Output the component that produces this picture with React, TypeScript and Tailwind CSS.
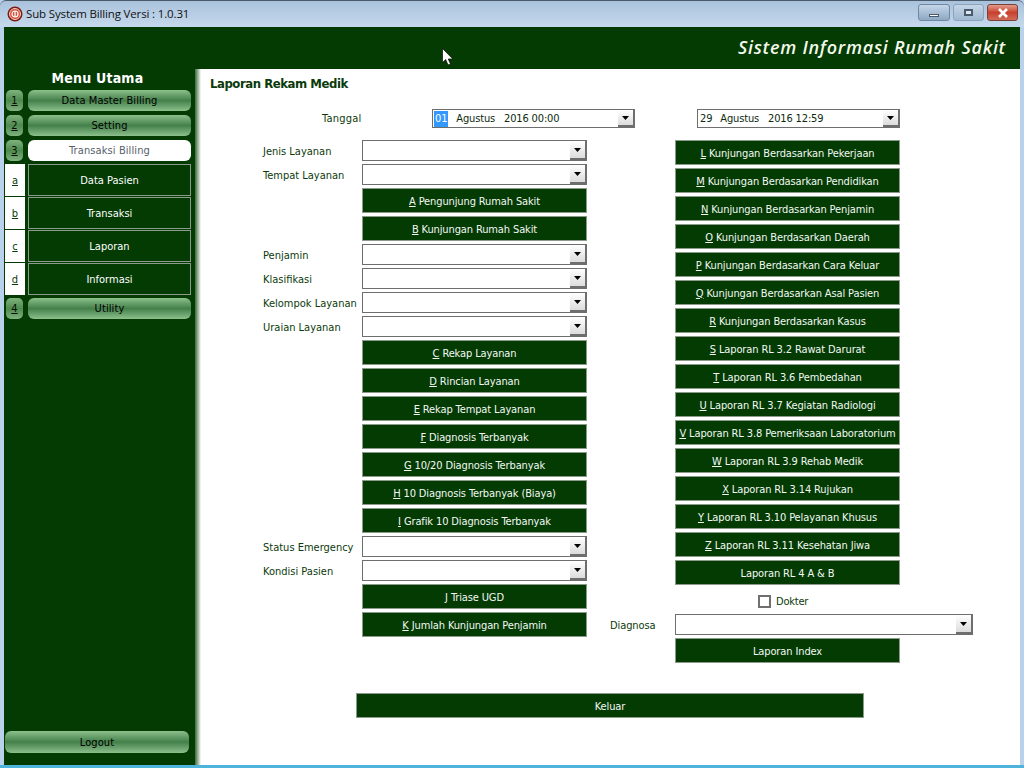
import type { ReactNode } from "react";

const font = { tahoma: "font-['DejaVu_Sans_Condensed','DejaVu_Sans',sans-serif]" };

function Mnemonic({ text }: { text: string }) {
  // first letter is the keyboard shortcut
  return (
    <>
      <span className="underline">{text[0]}</span>
      {text.slice(1)}
    </>
  );
}

function GreenButton({ label, w = "w-[225px]" }: { label: ReactNode; w?: string }) {
  return (
    <button className={`${w} block h-[25px] pt-[1px] shrink-0 bg-[#033b03] border border-[#8b9a8b] text-[#f4f8f4] text-[11px] leading-none tracking-[-0.12px] whitespace-nowrap`}>
      {label}
    </button>
  );
}

function Combo({ w = "w-[225px]", h = "h-[21px]", children }: { w?: string; h?: string; children?: ReactNode }) {
  return (
    <div className={`${w} ${h} shrink-0 bg-white border-l border-t border-b border-[#6e6e6e] flex items-center justify-between text-[11px] text-[#0d2a0d]`}>
      <div className="flex items-center pl-[1px] pt-[1px] whitespace-nowrap tracking-[-0.15px]">{children}</div>
      <div className="w-[17px] h-full bg-gradient-to-b from-[#ffffff] to-[#dcdcdc] border-r-2 border-b-2 border-[#6e6e6e] flex items-center justify-center">
        <svg width="7" height="4" viewBox="0 0 7 4">
          <path d="M0 0h7L3.5 4z" fill="#000" />
        </svg>
      </div>
    </div>
  );
}

function Field({ label }: { label: string }) {
  return (
    <div className="flex items-center h-[21px]">
      <span className="w-[99px] pt-[4px] text-[11px] text-[#0b3a0b] whitespace-nowrap">{label}</span>
      <Combo />
    </div>
  );
}

function LeftBtn({ label }: { label: string }) {
  return (
    <div className="pl-[99px]">
      <GreenButton label={<Mnemonic text={label} />} />
    </div>
  );
}

function MenuPill({ n, label, active }: { n: string; label: string; active?: boolean }) {
  return (
    <div className="flex gap-[5px] h-[21px] pl-[2px]">
      <div className="w-[17px] rounded-[5px] bg-gradient-to-b from-[#7fb27f] via-[#4f8a4f] to-[#7fb27f] text-[11px] pt-[1px] flex items-center justify-center text-[#020f02] underline">
        {n}
      </div>
      <div
        className={
          active
            ? "w-[163px] rounded-[6px] pt-[2px] bg-white text-[#55606a] text-[11px] tracking-[0.1px] flex items-center justify-center"
            : "w-[163px] rounded-[6px] pt-[2px] bg-gradient-to-b from-[#8cc08c] via-[#44804a] to-[#8cc08c] text-[#000] text-[11px] tracking-[0.1px] flex items-center justify-center"
        }
      >
        {label}
      </div>
    </div>
  );
}

function SubItem({ k, label }: { k: string; label: string }) {
  return (
    <div className="flex h-[32px] gap-[3px] mb-[1px] pl-[1px]">
      <div className="w-[20px] bg-white text-[11px] pt-[2px] text-[#0b3a0b] underline flex items-center justify-center">{k}</div>
      <div className="w-[163px] border border-[#8b9a8b] pt-[2px] text-white text-[11px] flex items-center justify-center">{label}</div>
    </div>
  );
}

const rightButtons = [
  "L Kunjungan Berdasarkan Pekerjaan",
  "M Kunjungan Berdasarkan Pendidikan",
  "N Kunjungan Berdasarkan Penjamin",
  "O Kunjungan Berdasarkan Daerah",
  "P Kunjungan Berdasarkan Cara Keluar",
  "Q Kunjungan Berdasarkan Asal Pasien",
  "R Kunjungan Berdasarkan Kasus",
  "S Laporan RL 3.2 Rawat Darurat",
  "T Laporan RL 3.6 Pembedahan",
  "U Laporan RL 3.7 Kegiatan Radiologi",
  "V Laporan RL 3.8 Pemeriksaan Laboratorium",
  "W Laporan RL 3.9 Rehab Medik",
  "X Laporan RL 3.14 Rujukan",
  "Y Laporan RL 3.10 Pelayanan Khusus",
  "Z Laporan RL 3.11 Kesehatan Jiwa",
];

export default function App() {
  return (
    <div className={`w-[1024px] h-[768px] overflow-hidden relative flex flex-col bg-[#b9d1ea] border-b-[3px] border-[#4fb4dc] ${font.tahoma}`}>
      {/* title bar */}
      <div className="h-[27px] shrink-0 rounded-t-[6px] bg-gradient-to-b from-[#a9c2dc] to-[#c6d9ec] border-t border-[#4a5a6a] flex items-center pl-[7px] pr-[6px]">
        <svg width="16" height="16" viewBox="0 0 16 16" className="shrink-0">
          <circle cx="8" cy="8" r="7.5" fill="#7a1a12" />
          <circle cx="8" cy="8" r="5.5" fill="#d9503a" stroke="#f3d0c0" />
          <circle cx="8" cy="8" r="3" fill="none" stroke="#fff" strokeWidth="1.2" />
          <rect x="7.4" y="5" width="1.2" height="6" fill="#fff" />
        </svg>
        <span className="ml-[3px] font-['Open_Sans',sans-serif] text-[11.5px] tracking-[-0.15px] text-[#111]">Sub System Billing Versi : 1.0.31</span>
        <div className="ml-auto flex gap-[3px] -mt-[3px]">
          <div className="w-[32px] h-[17px] rounded-[3px] border border-[#6f88a3] bg-gradient-to-b from-[#c5d6e8] to-[#8ea8c3] flex items-center justify-center">
            <div className="w-[10px] h-[3px] bg-white border border-[#4a5a6a] mt-[5px]" />
          </div>
          <div className="w-[31px] h-[17px] rounded-[3px] border border-[#8ba3bc] bg-gradient-to-b from-[#c5d6e8] to-[#a0b8d0] flex items-center justify-center">
            <div className="w-[9px] h-[7px] bg-[#dce6f0] border-2 border-[#4a5a6a]" />
          </div>
          <div className="w-[31px] h-[17px] rounded-[3px] border border-[#7a4038] bg-gradient-to-b from-[#e09a8c] via-[#c8402c] to-[#d06a58] flex items-center justify-center">
            <svg width="12" height="10" viewBox="0 0 12 10">
              <path d="M2 1l8 8M10 1L2 9" stroke="#fff" strokeWidth="2.6" />
            </svg>
          </div>
        </div>
      </div>

      <div className="flex-1 flex flex-col mx-[4px] bg-white min-h-0">
        {/* header band */}
        <div className="h-[42px] shrink-0 bg-[#033b03] flex items-center justify-end pr-[14px] pb-[2px]">
          <span className="font-['Open_Sans',sans-serif] italic font-semibold text-[18px] text-[#f4f8ea] tracking-[0.75px]">Sistem Informasi Rumah Sakit</span>
        </div>

        <div className="flex-1 flex min-h-0">
          {/* sidebar */}
          <aside className="w-[191px] shrink-0 bg-[#033b03] flex flex-col">
            <div className="h-[21px] pr-[4px] text-center text-white font-bold text-[14px] leading-[18px] tracking-[0.2px]">Menu Utama</div>
            <div className="flex flex-col gap-[4px]">
              <MenuPill n="1" label="Data Master Billing" />
              <MenuPill n="2" label="Setting" />
              <MenuPill n="3" label="Transaksi Billing" active />
            </div>
            <div className="mt-[3px]">
              <SubItem k="a" label="Data Pasien" />
              <SubItem k="b" label="Transaksi" />
              <SubItem k="c" label="Laporan" />
              <SubItem k="d" label="Informasi" />
            </div>
            <div className="mt-[2px]">
              <MenuPill n="4" label="Utility" />
            </div>
            <div className="mt-auto mb-[12px] ml-[1px] w-[184px] h-[22px] pt-[2px] rounded-[6px] bg-gradient-to-b from-[#8cc08c] via-[#44804a] to-[#8cc08c] text-[#000] text-[11px] tracking-[0.1px] flex items-center justify-center">
              Logout
            </div>
          </aside>
          <div className="w-[6px] shrink-0 bg-gradient-to-r from-[#3d6b3d] to-white" />

          {/* report form */}
          <main className="flex-1 min-w-0 text-[#0b3a0b]">
            <h1 className="mt-[6px] ml-[9px] h-[18px] text-[13px] leading-[18px] font-bold text-[#0b3a0b] tracking-[-0.45px]">Laporan Rekam Medik</h1>

            <div className="mt-[16px] flex items-center h-[19px]">
              <span className="ml-[121px] w-[110px] pt-[2px] text-[11px] tracking-[0.2px]">Tanggal</span>
              <Combo w="w-[203px]" h="h-[19px]">
                <span className="bg-[#3399ff] text-white px-[1px]">01</span>
                <span className="ml-[8px]">Agustus</span>
                <span className="ml-[9px]">2016 00:00</span>
              </Combo>
              <div className="ml-[62px]">
                <Combo w="w-[203px]" h="h-[19px]">
                  <span className="ml-[1px]">29</span>
                  <span className="ml-[8px]">Agustus</span>
                  <span className="ml-[9px]">2016 12:59</span>
                </Combo>
              </div>
            </div>

            <div className="mt-[12px] flex">
              <div className="ml-[62px] w-[324px] flex flex-col gap-[3px]">
                <Field label="Jenis Layanan" />
                <Field label="Tempat Layanan" />
                <LeftBtn label="A Pengunjung Rumah Sakit" />
                <LeftBtn label="B Kunjungan Rumah Sakit" />
                <Field label="Penjamin" />
                <Field label="Klasifikasi" />
                <Field label="Kelompok Layanan" />
                <Field label="Uraian Layanan" />
                <LeftBtn label="C Rekap Layanan" />
                <LeftBtn label="D Rincian Layanan" />
                <LeftBtn label="E Rekap Tempat Layanan" />
                <LeftBtn label="F Diagnosis Terbanyak" />
                <LeftBtn label="G 10/20 Diagnosis Terbanyak" />
                <LeftBtn label="H 10 Diagnosis Terbanyak (Biaya)" />
                <LeftBtn label="I Grafik 10 Diagnosis Terbanyak" />
                <Field label="Status Emergency" />
                <Field label="Kondisi Pasien" />
                <LeftBtn label="J Triase UGD" />
                <LeftBtn label="K Jumlah Kunjungan Penjamin" />
              </div>

              <div className="ml-[23px] flex flex-col">
                <div className="pl-[65px] flex flex-col gap-[3px]">
                  {rightButtons.map((b) => (
                    <GreenButton key={b} label={<Mnemonic text={b} />} />
                  ))}
                  <GreenButton label="Laporan RL 4 A & B" />
                </div>
                <div className="pl-[148px] mt-[9px] h-[14px] flex items-center gap-[5px] text-[11px]">
                  <span className="w-[13px] h-[13px] border-2 border-[#707070] bg-white" />
                  <span className="pt-[2px] tracking-[-0.2px]">Dokter</span>
                </div>
                <div className="mt-[6px] flex items-center h-[21px]">
                  <span className="w-[65px] pt-[3px] text-[11px] tracking-[-0.1px]">Diagnosa</span>
                  <Combo w="w-[298px]" />
                </div>
                <div className="pl-[65px] mt-[3px]">
                  <GreenButton label="Laporan Index" />
                </div>
              </div>
            </div>

            <div className="mt-[30px] ml-[155px]">
              <GreenButton w="w-[508px]" label="Keluar" />
            </div>
          </main>
        </div>
      </div>

      {/* mouse pointer caught in the screenshot */}
      <svg className="absolute left-[441px] top-[47px]" width="13" height="20" viewBox="0 0 13 20">
        <path d="M1.5 1.5v14l3.2-3L7 18l2.5-1-2.3-5h4.6z" fill="#fff" stroke="#0a0a0a" strokeWidth="0.7" />
      </svg>
    </div>
  );
}
